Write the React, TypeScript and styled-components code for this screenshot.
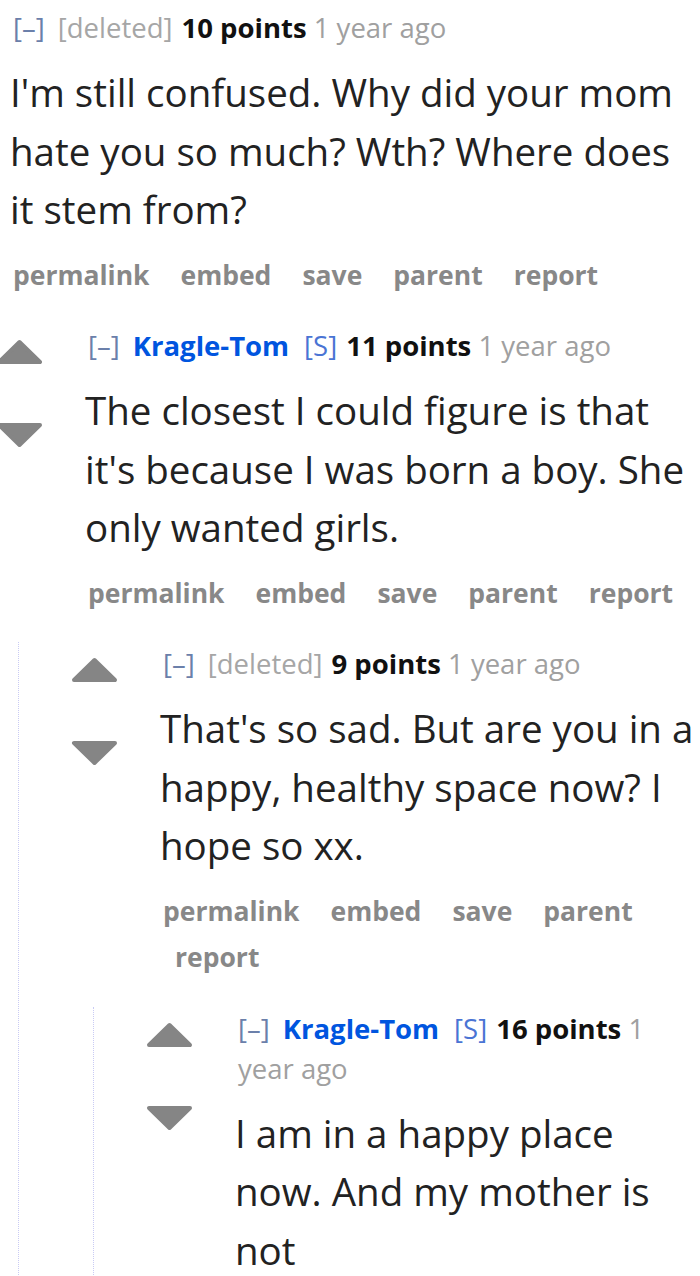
import React from "react";
import styled, { createGlobalStyle } from "styled-components";

type CommentData = {
    author: string;
    deleted?: boolean;
    submitter?: boolean;
    points: number;
    age: string;
    body: string;
    noArrows?: boolean;
    reply?: CommentData;
};

const thread: CommentData = {
    author: "[deleted]",
    deleted: true,
    points: 10,
    age: "1 year ago",
    noArrows: true,
    body: "I'm still confused. Why did your mom hate you so much? Wth? Where does it stem from?",
    reply: {
        author: "Kragle-Tom",
        submitter: true,
        points: 11,
        age: "1 year ago",
        body: "The closest I could figure is that it's because I was born a boy. She only wanted girls.",
        reply: {
            author: "[deleted]",
            deleted: true,
            points: 9,
            age: "1 year ago",
            body: "That's so sad. But are you in a happy, healthy space now? I hope so xx.",
            reply: {
                author: "Kragle-Tom",
                submitter: true,
                points: 16,
                age: "1 year ago",
                body: "I am in a happy place now. And my mother is not",
            },
        },
    },
};

const actions = ["permalink", "embed", "save", "parent", "report"];

const GlobalStyle = createGlobalStyle`
    html, body {
        margin: 0;
        padding: 0;
        background: #fff;
    }
    body {
        font-family: "Open Sans", "Noto Sans", sans-serif;
        color: #222;
    }
`;

const Page = styled.div`
    width: 700px;
    height: 1276px;
    overflow: hidden;
    padding-top: 8px;
    box-sizing: border-box;
`;

const Wrapper = styled.div``;

const Row = styled.div`
    display: flex;
    align-items: flex-start;
`;

const Midcol = styled.div`
    width: 89px;
    flex-shrink: 0;
    display: flex;
    flex-direction: column;
    gap: 57px;
    padding-top: 13px;
`;

const Entry = styled.div<{ $pad: number }>`
    flex: 1;
    min-width: 0;
    padding-left: ${(p) => p.$pad}px;
    padding-right: 2px;
`;

const Tagline = styled.div`
    font-size: 27.5px;
    line-height: 40px;
    color: #999;
    padding-left: 3px;
`;

const Expand = styled.span`
    color: #6b80aa;
    margin-right: 13px;
`;

const Author = styled.span<{ $deleted?: boolean }>`
    color: ${(p) => (p.$deleted ? "#a6a6a6" : "#0055df")};
    font-weight: ${(p) => (p.$deleted ? 400 : 700)};
`;

const Flair = styled.span`
    color: #4a74d4;
    margin-left: 15px;
`;

const Score = styled.span`
    color: #111;
    font-weight: 700;
    margin-left: 9px;
`;

const Time = styled.span`
    color: #a0a0a0;
`;

const Body = styled.p`
    margin: 15px 0 0;
    font-size: 38.5px;
    line-height: 58.5px;
    color: #222;
`;

const Buttons = styled.ul`
    list-style: none;
    margin: 13px 0 0;
    padding: 0 0 0 3px;
    display: flex;
    flex-wrap: wrap;
    font-size: 26.5px;
    line-height: 46.5px;
    font-weight: 700;
    color: #888;
`;

const Button = styled.li`
    padding: 0 19px 0 12px;
    &:first-child {
        padding-left: 0;
    }
`;

const Child = styled.div<{ $line: boolean }>`
    margin-top: ${(p) => (p.$line ? 26 : 28)}px;
    margin-left: ${(p) => (p.$line ? 22 : -4)}px;
    padding-top: ${(p) => (p.$line ? 2 : 0)}px;
    padding-left: ${(p) => (p.$line ? 52 : 0)}px;
    border-left: ${(p) => (p.$line ? "1px dotted #c9cbf4" : "none")};
`;

const Arrow = ({ down }: { down?: boolean }) => (
    <svg width="47" height="26" viewBox="0 0 47 26" style={{ display: "block" }}>
        <polygon
            points={down ? "3,3 44,3 23.5,23" : "23.5,3 44,23 3,23"}
            fill="#858585"
            stroke="#858585"
            strokeWidth="4"
            strokeLinejoin="round"
        />
    </svg>
);

const Comment = ({ data, depth }: { data: CommentData; depth: number }) => (
    <Wrapper>
        <Row>
            {!data.noArrows && (
                <Midcol>
                    <Arrow />
                    <Arrow down />
                </Midcol>
            )}
            <Entry $pad={data.noArrows ? 10 : 0}>
                <Tagline>
                    <Expand>[–]</Expand>
                    <Author $deleted={data.deleted}>{data.author}</Author>
                    {data.submitter && <Flair>[S]</Flair>}
                    <Score>{data.points} points</Score> <Time>{data.age}</Time>
                </Tagline>
                <Body>{data.body}</Body>
                <Buttons>
                    {actions.map((a) => (
                        <Button key={a}>{a}</Button>
                    ))}
                </Buttons>
            </Entry>
        </Row>
        {data.reply && (
            <Child $line={depth > 0}>
                <Comment data={data.reply} depth={depth + 1} />
            </Child>
        )}
    </Wrapper>
);

export default function App() {
    return (
        <Page>
            <GlobalStyle />
            <Comment data={thread} depth={0} />
        </Page>
    );
}
